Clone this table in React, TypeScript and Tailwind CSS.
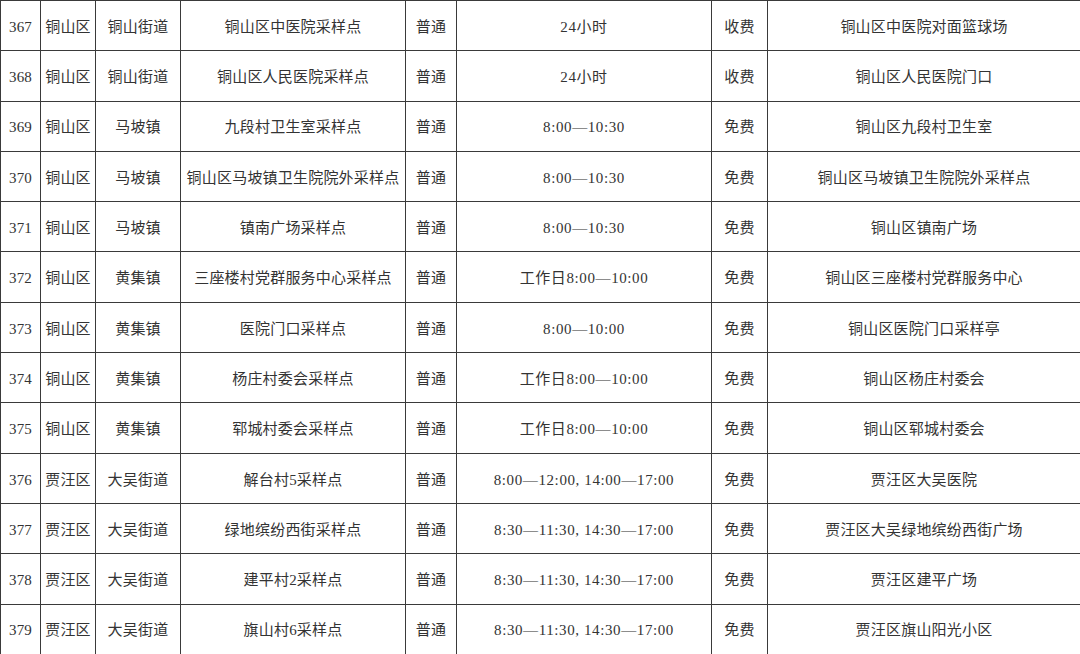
const rows: string[][] = [
  ["367", "铜山区", "铜山街道", "铜山区中医院采样点", "普通", "24小时", "收费", "铜山区中医院对面篮球场"],
  ["368", "铜山区", "铜山街道", "铜山区人民医院采样点", "普通", "24小时", "收费", "铜山区人民医院门口"],
  ["369", "铜山区", "马坡镇", "九段村卫生室采样点", "普通", "8:00—10:30", "免费", "铜山区九段村卫生室"],
  ["370", "铜山区", "马坡镇", "铜山区马坡镇卫生院院外采样点", "普通", "8:00—10:30", "免费", "铜山区马坡镇卫生院院外采样点"],
  ["371", "铜山区", "马坡镇", "镇南广场采样点", "普通", "8:00—10:30", "免费", "铜山区镇南广场"],
  ["372", "铜山区", "黄集镇", "三座楼村党群服务中心采样点", "普通", "工作日8:00—10:00", "免费", "铜山区三座楼村党群服务中心"],
  ["373", "铜山区", "黄集镇", "医院门口采样点", "普通", "8:00—10:00", "免费", "铜山区医院门口采样亭"],
  ["374", "铜山区", "黄集镇", "杨庄村委会采样点", "普通", "工作日8:00—10:00", "免费", "铜山区杨庄村委会"],
  ["375", "铜山区", "黄集镇", "郓城村委会采样点", "普通", "工作日8:00—10:00", "免费", "铜山区郓城村委会"],
  ["376", "贾汪区", "大吴街道", "解台村5采样点", "普通", "8:00—12:00, 14:00—17:00", "免费", "贾汪区大吴医院"],
  ["377", "贾汪区", "大吴街道", "绿地缤纷西街采样点", "普通", "8:30—11:30, 14:30—17:00", "免费", "贾汪区大吴绿地缤纷西街广场"],
  ["378", "贾汪区", "大吴街道", "建平村2采样点", "普通", "8:30—11:30, 14:30—17:00", "免费", "贾汪区建平广场"],
  ["379", "贾汪区", "大吴街道", "旗山村6采样点", "普通", "8:30—11:30, 14:30—17:00", "免费", "贾汪区旗山阳光小区"],
];

const widths = ["w-[40px]", "w-[55px]", "w-[85px]", "w-[225px]", "w-[51px]", "w-[255px]", "w-[56px]", "w-[313px]"];

export default function App() {
  return (
    <div className="w-[1080px] h-[654px] overflow-hidden bg-white">
      <table className="w-[1080px] table-fixed border-collapse font-['Liberation_Serif','Noto_Sans_CJK_SC',serif] text-[15px] text-[#333]">
        <colgroup>
          {widths.map((w, i) => (
            <col key={i} className={w} />
          ))}
        </colgroup>
        <tbody>
          {rows.map((r) => (
            <tr key={r[0]} className="h-[50.3px]">
              {r.map((c, i) => (
                <td
                  key={i}
                  className={`border border-[#3a3a3a] text-center whitespace-nowrap px-0 pt-[3px] pb-0 ${i === 5 ? "tracking-[0.6px]" : "tracking-[0.2px]"}`}
                >
                  {c}
                </td>
              ))}
            </tr>
          ))}
        </tbody>
      </table>
    </div>
  );
}
